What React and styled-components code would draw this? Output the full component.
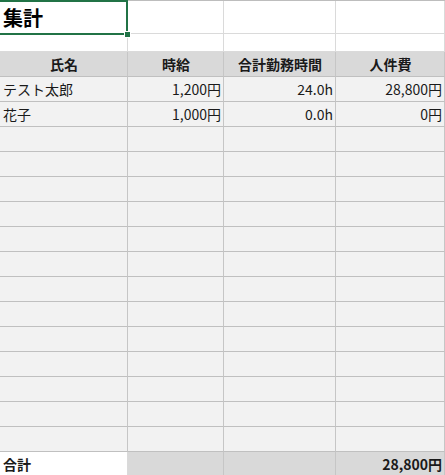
import React from "react";
import styled, { createGlobalStyle } from "styled-components";

const Global = createGlobalStyle`
  html, body { margin: 0; padding: 0; background: #fff; overflow: hidden; }
  body { width: 445px; height: 475px; }
  #root { width: 445px; height: 475px; overflow: hidden; }
`;

const Sheet = styled.div`
  display: grid;
  grid-template-columns: 128px 96px 112px 1fr;
  grid-auto-rows: 25px;
  grid-template-rows: 33px 18px;
  border-top: 1px solid #bdbdbd;
  font-family: "Noto Sans CJK JP", "Noto Sans", sans-serif;
  font-size: 14px;
  color: #1a1a1a;
  width: 445px;
`;

const BG = {
  white: "#ffffff",
  head: "#d9d9d9",
  data: "#f2f2f2",
};

const Cell = styled.div`
  position: relative;
  box-sizing: border-box;
  display: flex;
  align-items: center;
  justify-content: ${(p) =>
    p.$align === "right" ? "flex-end" : p.$align === "center" ? "center" : "flex-start"};
  padding: 0 2px 0 3px;
  background: ${(p) => BG[p.$bg || "white"]};
  border-right: 1px solid ${(p) => (p.$bg === "white" ? "#dadada" : "#c6c6c6")};
  border-bottom: 1px solid ${(p) => (p.$bg === "white" ? "#dadada" : "#c0c0c0")};
  font-weight: ${(p) => (p.$bold ? 700 : 400)};
  white-space: nowrap;
  line-height: 1;
`;

const Title = styled(Cell)`
  z-index: 2;
  font-size: 20px;
  font-weight: 700;
  padding-left: 3px;
  padding-top: 1px;
  color: #000;
`;

const Selection = styled.div`
  position: absolute;
  top: -1px;
  left: -2px;
  right: -1px;
  bottom: -2px;
  border: 2px solid #217346;
  pointer-events: none;
`;

const Handle = styled.div`
  position: absolute;
  right: -5px;
  bottom: -5px;
  width: 5px;
  height: 5px;
  background: #217346;
  border: 1px solid #fff;
`;

const rows = [
  ["テスト太郎", "1,200円", "24.0h", "28,800円"],
  ["花子", "1,000円", "0.0h", "0円"],
];

export default function App() {
  const empty = Array.from({ length: 13 });
  return (
    <>
      <Global />
      <Sheet>
        <Title $bg="white">
          集計
          <Selection>
            <Handle />
          </Selection>
        </Title>
        <Cell $bg="white" />
        <Cell $bg="white" />
        <Cell $bg="white" />

        <Cell $bg="white" />
        <Cell $bg="white" />
        <Cell $bg="white" />
        <Cell $bg="white" />

        <Cell $bg="head" $align="center" $bold>氏名</Cell>
        <Cell $bg="head" $align="center" $bold>時給</Cell>
        <Cell $bg="head" $align="center" $bold>合計勤務時間</Cell>
        <Cell $bg="head" $align="center" $bold>人件費</Cell>

        {rows.map((r, i) => (
          <React.Fragment key={i}>
            <Cell $bg="data">{r[0]}</Cell>
            <Cell $bg="data" $align="right">{r[1]}</Cell>
            <Cell $bg="data" $align="right">{r[2]}</Cell>
            <Cell $bg="data" $align="right">{r[3]}</Cell>
          </React.Fragment>
        ))}

        {empty.map((_, i) => (
          <React.Fragment key={"e" + i}>
            <Cell $bg="data" />
            <Cell $bg="data" />
            <Cell $bg="data" />
            <Cell $bg="data" />
          </React.Fragment>
        ))}

        <Cell $bg="white" $bold>合計</Cell>
        <Cell $bg="head" />
        <Cell $bg="head" />
        <Cell $bg="head" $align="right" $bold>28,800円</Cell>
      </Sheet>
    </>
  );
}
